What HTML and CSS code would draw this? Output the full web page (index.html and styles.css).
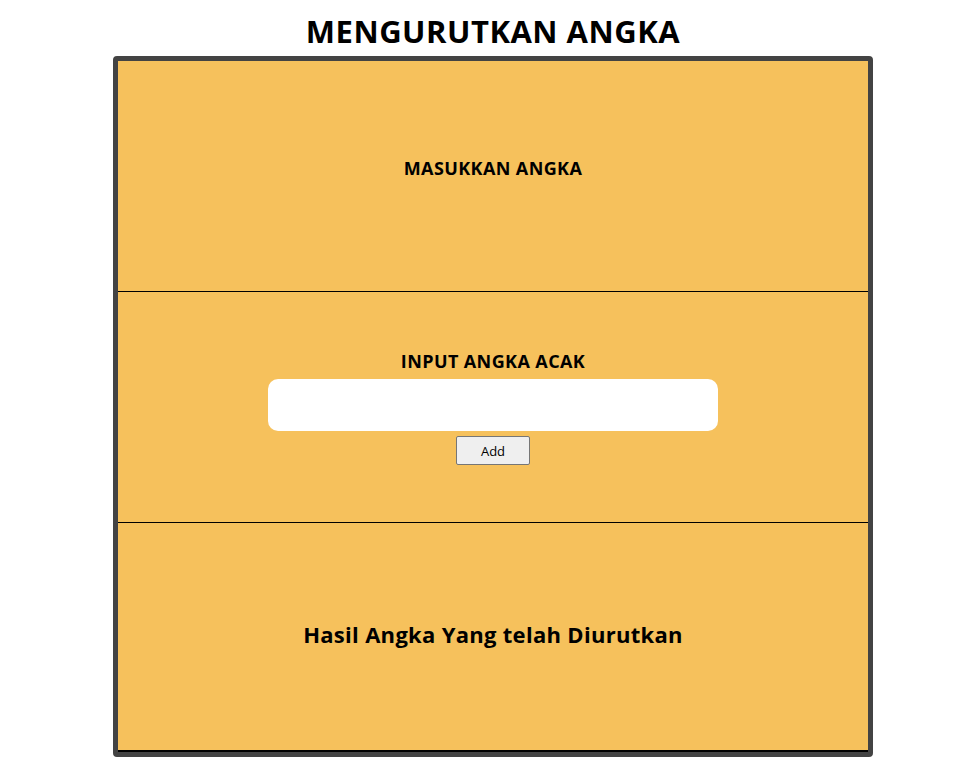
FILE: index.html
```html
<!DOCTYPE html>
<html>
<head>
<meta charset="utf-8">
<link rel="stylesheet" href="styles.css">
<title>Mengurutkan Angka</title>
</head>
<body>
<div class="page">
  <h1 class="title">MENGURUTKAN ANGKA</h1>
  <div class="board">
    <section class="panel panel-top">
      <h3 class="panel-label">MASUKKAN ANGKA</h3>
    </section>
    <section class="panel panel-input">
      <h3 class="panel-label">INPUT ANGKA ACAK</h3>
      <input class="number-input" type="text">
      <button class="add-btn" type="button">Add</button>
    </section>
    <section class="panel panel-result">
      <h2 class="result-label">Hasil Angka Yang telah Diurutkan</h2>
    </section>
  </div>
</div>
</body>
</html>
```

FILE: styles.css
```css
html, body {
  margin: 0;
  padding: 0;
  background: #ffffff;
}

body {
  font-family: "Open Sans", "Noto Sans", sans-serif;
  color: #000;
}

.page {
  width: 760px;
  margin-left: 113px;
}

.title {
  margin: 0;
  padding-top: 11px;
  height: 56px;
  box-sizing: border-box;
  font-size: 31px;
  line-height: 40px;
  letter-spacing: 0.5px;
  font-weight: 700;
  text-align: center;
}

.board {
  border: 5px solid #434343;
  border-radius: 4px;
  background: #f6c15c;
  display: flex;
  flex-direction: column;
}

.panel {
  height: 230px;
  border-bottom: 1px solid #000;
  display: flex;
  flex-direction: column;
  align-items: center;
  justify-content: center;
}

.panel-top {
  box-sizing: border-box;
  height: 231px;
  padding-bottom: 16px;
}

.panel-result {
  box-sizing: border-box;
  height: 229px;
  padding-bottom: 6px;
  border-bottom-width: 2px;
}

.panel-label {
  margin: 0;
  font-size: 18px;
  line-height: 24px;
  letter-spacing: 0.4px;
  font-weight: 700;
}

.number-input {
  margin-top: 6px;
  width: 450px;
  height: 52px;
  box-sizing: border-box;
  border: none;
  border-radius: 10px;
  background: #fff;
  padding: 0 12px;
  outline: none;
}

.add-btn {
  margin-top: 5px;
  width: 74px;
  height: 29px;
  box-sizing: border-box;
  background: #efefef;
  border: 1px solid #767676;
  border-radius: 2px;
  font-family: "Open Sans", "Noto Sans", sans-serif;
  font-size: 13px;
  color: #000;
  padding: 0;
}

.result-label {
  margin: 0;
  font-size: 22px;
  line-height: 28px;
  letter-spacing: 0.3px;
  font-weight: 700;
}
```
